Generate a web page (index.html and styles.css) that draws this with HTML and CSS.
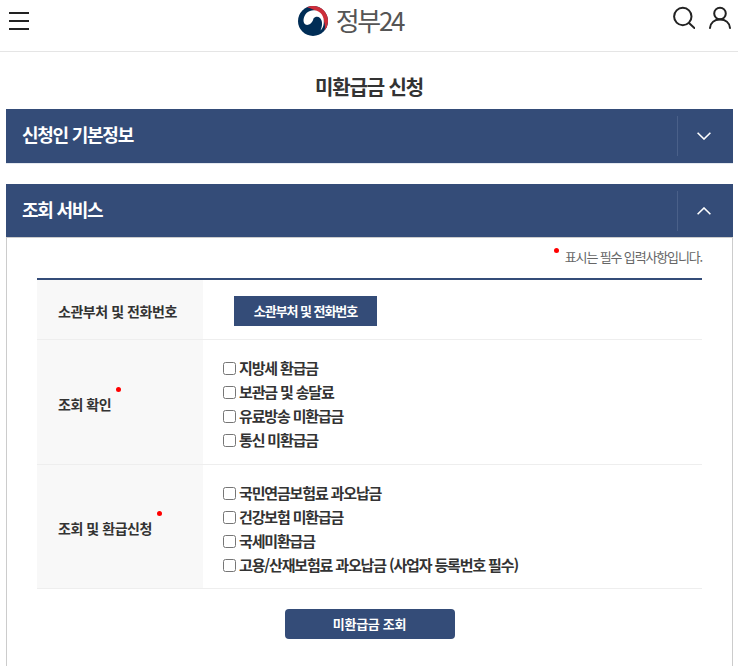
FILE: index.html
```html
<!DOCTYPE html>
<html lang="ko">
<head>
    <meta charset="utf-8">
    <meta name="viewport" content="width=device-width, initial-scale=1">
    <title>미환급금 신청</title>
    <link rel="stylesheet" href="styles.css">
</head>
<body>
<header class="top-bar">
    <button class="menu-btn" aria-label="메뉴">
        <span></span><span></span><span></span>
    </button>
    <div class="logo">
        <svg class="logo-mark" viewBox="0 0 30 30" width="30" height="30">
            <circle cx="15" cy="15" r="15" fill="#002d56"/>
            <path d="M9 1.2 A15 15 0 0 1 26.5 24.6 C29 14 21 4 9 1.2 Z" fill="#cd2e3a"/>
            <path d="M5.5 14 C6 7.5 11 3.8 16.5 4.2 C23 4.8 26.5 11 25.8 17 C25.5 20 24.5 22.5 22.5 24.5 C24.5 20 24.8 15 22 12 C20 10 17 10.5 15.5 12.5 C14.5 17 11 19.5 8 18.8 C6.2 18.2 5.4 16 5.5 14 Z" fill="#fff"/>
        </svg>
        <span class="logo-text">정부24</span>
    </div>
    <div class="top-icons">
        <svg viewBox="0 0 24 24" width="24" height="24" fill="none" stroke="#222" stroke-width="2">
            <circle cx="11.8" cy="10.5" r="8.7"/>
            <path d="M18 17 L23.4 22" stroke-linecap="round"/>
        </svg>
        <svg viewBox="0 0 24 24" width="24" height="24" fill="none" stroke="#222" stroke-width="2">
            <circle cx="12" cy="7.5" r="5.8"/>
            <path d="M2 22 C2.5 16.5 6.5 13.5 12 13.5 C17.5 13.5 21.5 16.5 22 22" stroke-linecap="round"/>
        </svg>
    </div>
</header>

<h1 class="page-title">미환급금 신청</h1>

<section class="section section-closed">
    <div class="section-head">
        <h2>신청인 기본정보</h2>
        <span class="toggle">
            <svg viewBox="0 0 14 8" width="14" height="8" fill="none" stroke="#fff" stroke-width="1.6"><path d="M0.6 0.8 L7 7 L13.4 0.8"/></svg>
        </span>
    </div>
</section>

<section class="section">
    <div class="section-head">
        <h2>조회 서비스</h2>
        <span class="toggle">
            <svg viewBox="0 0 14 8" width="14" height="8" fill="none" stroke="#fff" stroke-width="1.6"><path d="M0.6 7.2 L7 1 L13.4 7.2"/></svg>
        </span>
    </div>
    <div class="section-body">
        <p class="req-note"><i class="note-dot"></i>표시는 필수 입력사항입니다.</p>
        <div class="form-table">
            <div class="form-row row-dept">
                <div class="form-label">소관부처 및 전화번호</div>
                <div class="form-value value-btn">
                    <button class="dept-btn">소관부처 및 전화번호</button>
                </div>
            </div>
            <div class="form-row">
                <div class="form-label"><span class="required">조회 확인<i class="req-dot"></i></span></div>
                <div class="form-value">
                    <label class="check"><input type="checkbox">지방세 환급금</label>
                    <label class="check"><input type="checkbox">보관금 및 송달료</label>
                    <label class="check"><input type="checkbox">유료방송 미환급금</label>
                    <label class="check"><input type="checkbox">통신 미환급금</label>
                </div>
            </div>
            <div class="form-row">
                <div class="form-label"><span class="required">조회 및 환급신청<i class="req-dot"></i></span></div>
                <div class="form-value value-last">
                    <label class="check"><input type="checkbox">국민연금보험료 과오납금</label>
                    <label class="check"><input type="checkbox">건강보험 미환급금</label>
                    <label class="check"><input type="checkbox">국세미환급금</label>
                    <label class="check"><input type="checkbox">고용/산재보험료 과오납금 (사업자 등록번호 필수)</label>
                </div>
            </div>
        </div>
        <div class="actions">
            <button class="search-btn">미환급금 조회</button>
        </div>
    </div>
</section>
</body>
</html>
```

FILE: styles.css
```css
html, body {
    height: 100%;
    overflow: hidden;
}
body {
    margin: 0;
    background-color: #fff;
    color: #333;
    font-family: "Noto Sans CJK KR", "Noto Sans", sans-serif;
}
button {
    font-family: inherit;
    border: none;
    cursor: pointer;
}
.top-bar {
    display: grid;
    grid-template-columns: 1fr auto 1fr;
    align-items: center;
    height: 51px;
    padding: 0 6px 0 9px;
    border-bottom: 1px solid #e5e5e5;
}
.menu-btn {
    display: flex;
    flex-direction: column;
    justify-content: space-between;
    width: 20px;
    height: 18px;
    margin-bottom: 9px;
    padding: 0;
    background: none;
}
.menu-btn span {
    display: block;
    height: 2px;
    background-color: #222;
}
.logo {
    display: flex;
    align-items: center;
    gap: 8px;
    margin: 0 40px 9px 0;
}
.logo-mark {
    display: block;
}
.logo-text {
    margin-bottom: 2px;
    font-size: 26px;
    line-height: 30px;
    letter-spacing: -2.3px;
    color: #555;
}
.top-icons {
    display: flex;
    justify-content: flex-end;
    gap: 13px;
    align-self: start;
    padding-top: 6px;
}
.page-title {
    margin: 22px 0 9px;
    text-align: center;
    font-size: 20px;
    line-height: 26px;
    font-weight: 700;
    letter-spacing: -1.15px;
    color: #333;
}
.section {
    margin: 0 5px 0 6px;
}
.section-closed {
    margin-bottom: 20px;
}
.section-head {
    display: flex;
    justify-content: space-between;
    align-items: center;
    height: 53px;
    padding-left: 16px;
    background-color: #344c78;
}
.section-closed .section-head {
    height: 54px;
    border-bottom: 1px solid #e3e8ef;
}
.section-head h2 {
    margin: 0 0 4px;
    font-size: 18px;
    font-weight: 700;
    letter-spacing: -1.25px;
    color: #fff;
}
.toggle {
    display: flex;
    justify-content: center;
    align-items: center;
    box-sizing: border-box;
    width: 56px;
    height: 40px;
    padding-right: 4px;
    border-left: 1px solid #4a6089;
}
.section-body {
    height: 429px;
    padding: 0 30px;
    border: 1px solid #ccc;
    border-bottom: none;
}
.req-note {
    margin: 0;
    height: 40px;
    padding-top: 9px;
    box-sizing: border-box;
    text-align: right;
    font-size: 13px;
    line-height: 20px;
    letter-spacing: -1.15px;
    color: #666;
}
.note-dot {
    display: inline-block;
    width: 5px;
    height: 5px;
    margin-right: 6px;
    border-radius: 50%;
    background-color: #f00;
    vertical-align: 9px;
}
.form-table {
    border-top: 2px solid #344c78;
}
.form-row {
    display: flex;
    border-bottom: 1px solid #eee;
}
.form-label {
    display: flex;
    align-items: center;
    flex: 0 0 166px;
    box-sizing: border-box;
    padding: 3px 0 0 21px;
    background-color: #f8f8f8;
    font-size: 14px;
    font-weight: 700;
    letter-spacing: -0.45px;
    color: #333;
}
.required {
    position: relative;
}
.req-dot {
    position: absolute;
    top: -7px;
    right: -10px;
    width: 5px;
    height: 5px;
    border-radius: 50%;
    background-color: #f00;
}
.form-value {
    flex: 1;
    padding: 15px 20px 13px;
}
.value-last {
    padding-bottom: 12px;
}
.row-dept {
    height: 60px;
    box-sizing: border-box;
}
.value-btn {
    padding: 16px 31px 0;
}
.dept-btn {
    display: block;
    width: 143px;
    height: 30px;
    padding: 0 0 2px;
    background-color: #344c78;
    color: #fff;
    font-size: 13px;
    font-weight: 700;
    letter-spacing: -1.05px;
}
.check {
    display: flex;
    align-items: center;
    height: 24px;
    font-size: 15px;
    font-weight: 700;
    letter-spacing: -1.15px;
    color: #333;
}
.check input {
    width: 13px;
    height: 13px;
    margin: 2px 3px 0 0;
}
.actions {
    display: flex;
    justify-content: center;
    padding-top: 20px;
}
.search-btn {
    width: 170px;
    height: 30px;
    padding: 0 0 2px;
    border-radius: 4px;
    background-color: #344c78;
    color: #fff;
    font-size: 13px;
    font-weight: 700;
    letter-spacing: -0.3px;
}
```
